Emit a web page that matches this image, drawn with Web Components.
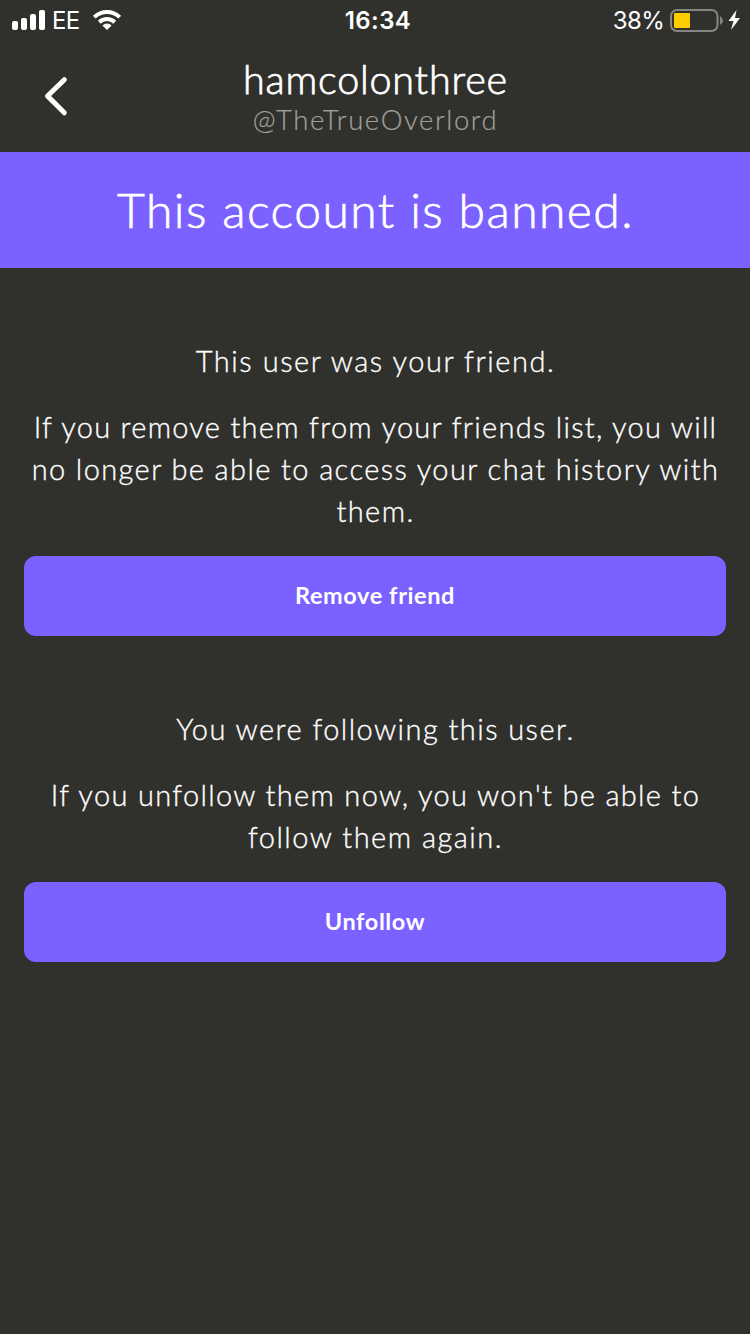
<!DOCTYPE html>
<html lang="en"><head><meta charset="utf-8"><title>Account</title>
<style>
html,body{margin:0;background:#30302c}
body{width:750px;height:1334px;overflow:hidden;font-family:Lato,"Open Sans",sans-serif;color:#fff}
</style></head><body>
<profile-screen></profile-screen>
<script>
function define(name, html){
  const t=document.createElement('template'); t.innerHTML=html;
  customElements.define(name, class extends HTMLElement{
    constructor(){super();this.attachShadow({mode:'open'}).append(t.content.cloneNode(true));}
  });
}
define('status-bar',`<style>
:host{display:grid;grid-template-columns:1fr auto 1fr;height:40px;align-items:center;font:400 24px/40px Inter,sans-serif;padding:0 10px 0 12px;box-sizing:border-box}
.l,.r{display:flex;align-items:center}.r{justify-content:flex-end}
svg{display:block;flex:none}
span{padding-top:2px;line-height:38px}
.l span{margin:0 13px 0 7px;letter-spacing:-.6px}.time{font-weight:600;letter-spacing:.4px;margin-left:4px}
.r span{margin-right:6px;letter-spacing:-.7px}
</style><div class="l">
<svg width="33" height="40" fill="#fff"><rect y="21" width="6" height="9" rx="2"/><rect x="9" y="18" width="6" height="12" rx="2"/><rect x="18" y="14" width="6" height="16" rx="2"/><rect x="27" y="10" width="6" height="20" rx="2"/></svg>
<span>EE</span>
<svg width="28" height="40" fill="none" stroke="#fff" stroke-width="4"><path d="M1.3 17.2a18 18 0 0 1 25.400 0M6.300 22.200a11 11 0 0 1 15.400 0"/><path stroke="none" fill="#fff" d="M14 30l-4.600-4.600a6.500 6.500 0 0 1 9.200 0z"/></svg>
</div><span class="time">16:34</span><div class="r"><span>38%</span>
<svg width="70" height="40"><rect x="1" y="10" width="46.500" height="21" rx="6" fill="none" stroke="#858582" stroke-width="2"/><rect x="4" y="13" width="16" height="15" rx="1" fill="#fc0"/><path d="M50 16q6 4.500 0 9z" fill="#858582"/><path d="M66.500 10l-8 11h5l-2.500 9 9-12h-5z" fill="#fff"/></svg></div>`);
define('profile-header',`<style>
:host{display:grid;grid-template-columns:111px 1fr 110px;height:112px}
svg{display:block;margin:32px 0 0 40px}.t{text-align:center}
.n{font-size:39.500px;line-height:48px;margin-top:15px;font-weight:300;letter-spacing:.8px;-webkit-text-stroke:.75px currentColor}
.h{font-size:27.500px;line-height:33px;font-weight:300;color:#a0a09a;letter-spacing:1.6px;-webkit-text-stroke:.2px currentColor}
</style><svg width="40" height="48" fill="none" stroke="#fff" stroke-width="5" stroke-linecap="round" stroke-linejoin="round"><path d="M24.300 7.700L7.500 24l16.800 16.800"/></svg>
<div class="t"><div class="n"><slot name="name"></slot></div><div class="h"><slot name="handle"></slot></div></div>`);
define('ban-banner',`<style>:host{display:block;height:116px;background:#7b61ff;text-align:center;font-size:48px;line-height:115px;font-weight:300;padding-left:1px;letter-spacing:1.45px;-webkit-text-stroke:.7px currentColor}</style><slot></slot>`);
define('text-line',`<style>:host{display:block;white-space:nowrap;width:max-content;margin:0 auto;padding-left:1px;letter-spacing:var(--track,1.4px);-webkit-text-stroke:.35px currentColor}</style><slot></slot>`);
define('action-button',`<style>:host{display:block}button{display:block;width:100%;height:80px;border:0;border-radius:12px;padding:0 0 2px;background:#7b61ff;color:#fff;font:700 23.500px/78px Lato,sans-serif;letter-spacing:.6px}</style><button><slot></slot></button>`);
define('action-section',`<style>:host{display:block;padding:0 24px;font-size:29px;line-height:42px;font-weight:300}
.b{margin:24px 0}</style><slot name="lead"></slot><div class="b"><slot></slot></div><slot name="action"></slot>`);
define('profile-screen',`<style>
:host{display:block;height:1334px;background:#30302c}
action-section{margin-top:72px}
</style>
<status-bar></status-bar>
<profile-header><span slot="name">hamcolonthree</span><span slot="handle">@TheTrueOverlord</span></profile-header>
<ban-banner><span>This account is banned.</span></ban-banner>
<action-section><text-line slot="lead" style="--track:1.55px">This user was your friend.</text-line>
<text-line style="--track:1.28px">If you remove them from your friends list, you will</text-line><text-line>no longer be able to access your chat history with</text-line><text-line>them.</text-line>
<action-button slot="action"><span>Remove friend</span></action-button></action-section>
<action-section><text-line slot="lead" style="--track:1.45px">You were following this user.</text-line>
<text-line style="--track:1.34px">If you unfollow them now, you won't be able to</text-line><text-line style="--track:1.5px">follow them again.</text-line>
<action-button slot="action"><span>Unfollow</span></action-button></action-section>`);
</script></body></html>
